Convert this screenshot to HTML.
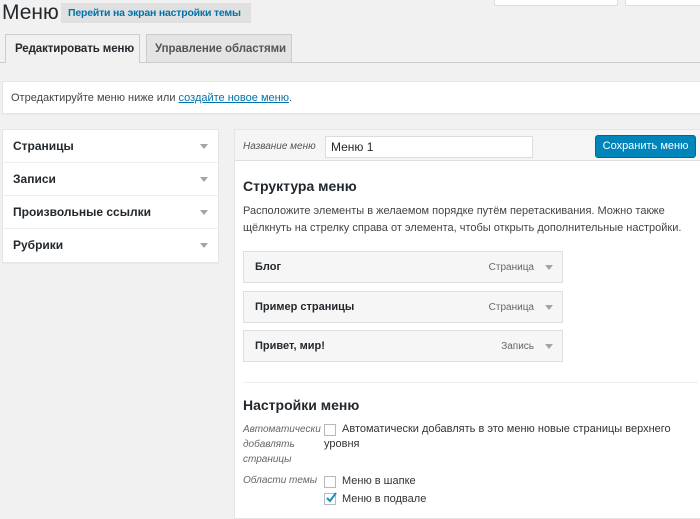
<!DOCTYPE html>
<html><head><meta charset="utf-8"><style>
*{box-sizing:border-box;margin:0;padding:0}
body{width:700px;height:515px;background:#f1f1f1;font-family:"Liberation Sans",sans-serif;color:#23282d;position:relative;overflow:hidden;font-size:12px}
.a{position:absolute;white-space:nowrap}
.box{background:#fff;border:1px solid #e5e5e5;box-shadow:0 1px 1px rgba(0,0,0,.04)}
.tri{width:0;height:0;border-left:4px solid transparent;border-right:4px solid transparent;border-top:5px solid #a0a5aa;position:absolute}
.item{position:absolute;left:243px;width:320px;height:32px;background:#f6f6f6;border:1px solid #dfdfdf;font-weight:bold;font-size:11px;padding:9px 11px;}
.item span{position:absolute;right:28px;top:10px;font-weight:normal;color:#666;font-size:10px}
.item .tri{right:9px;top:13px}
.cb{position:absolute;width:12px;height:12px;border:1px solid #b4b9be;background:#fff}
</style></head><body>
<div class="a" style="left:494px;top:-4px;width:124px;height:10px;background:#fff;border:1px solid #ddd;border-radius:2px"></div>
<div class="a" style="left:625px;top:-4px;width:80px;height:10px;background:#fff;border:1px solid #ddd;border-radius:2px"></div>
<div class="a" style="left:2px;top:1px;font-size:21px;color:#23282d">Меню</div>
<div class="a" style="left:61px;top:3px;width:190px;height:20px;background:#e0e0e0;color:#0073aa;font-weight:bold;font-size:10.5px;padding:4px 7px;letter-spacing:-0.2px">Перейти на экран настройки темы</div>
<div class="a" style="left:0;top:62px;width:700px;height:1px;background:#ccc"></div>
<div class="a" style="left:5px;top:34px;width:135px;height:29px;background:#f1f1f1;border:1px solid #ccc;border-bottom:none;font-weight:bold;font-size:11.5px;padding:8px 9px;letter-spacing:-0.1px">Редактировать меню</div>
<div class="a" style="left:146px;top:34px;width:146px;height:28px;background:#e4e4e4;border:1px solid #ccc;border-bottom:none;color:#555;font-weight:bold;font-size:11.5px;padding:8px 8px;letter-spacing:-0.1px">Управление областями</div>
<div class="a box" style="left:2px;top:81px;width:700px;height:33px;padding:10px 8px;font-size:11px;color:#444">Отредактируйте меню ниже или <span style="color:#0073aa;text-decoration:underline">создайте новое меню</span>.</div>
<div class="a box" style="left:2px;top:129px;width:217px;height:134px"></div>
<div class="a" style="left:13px;top:139px;font-weight:bold;font-size:12px">Страницы</div>
<div class="a" style="left:13px;top:172px;font-weight:bold;font-size:12px">Записи</div>
<div class="a" style="left:13px;top:205px;font-weight:bold;font-size:12px">Произвольные ссылки</div>
<div class="a" style="left:13px;top:238px;font-weight:bold;font-size:12px">Рубрики</div>
<div class="a" style="left:3px;top:162px;width:215px;height:1px;background:#eee"></div>
<div class="a" style="left:3px;top:195px;width:215px;height:1px;background:#eee"></div>
<div class="a" style="left:3px;top:228px;width:215px;height:1px;background:#eee"></div>
<div class="tri" style="left:200px;top:144px"></div>
<div class="tri" style="left:200px;top:177px"></div>
<div class="tri" style="left:200px;top:210px"></div>
<div class="tri" style="left:200px;top:243px"></div>
<div class="a" style="left:234px;top:129px;width:470px;height:390px;background:#fff;border:1px solid #e5e5e5"></div>
<div class="a" style="left:235px;top:130px;width:470px;height:31px;background:#f5f5f5;border-bottom:1px solid #dfdfdf"></div>
<div class="a" style="left:243px;top:141px;font-style:italic;font-size:10px;color:#555">Название меню</div>
<div class="a" style="left:325px;top:136px;width:208px;height:22px;background:#fff;border:1px solid #ddd;padding:3px 5px;font-size:12px">Меню 1</div>
<div class="a" style="left:595px;top:135px;width:101px;height:23px;background:#0085ba;border:1px solid #006799;border-radius:3px;color:#fff;font-size:11px;padding:4px 0;text-align:center">Сохранить меню</div>
<div class="a" style="left:243px;top:178px;font-weight:bold;font-size:14px">Структура меню</div>
<div class="a" style="left:243px;top:203px;font-size:11px;color:#444;line-height:17px;width:460px;white-space:normal">Расположите элементы в желаемом порядке путём перетаскивания. Можно также щёлкнуть на стрелку справа от элемента, чтобы открыть дополнительные настройки.</div>
<div class="item" style="top:251px">Блог<span>Страница</span><div class="tri"></div></div>
<div class="item" style="top:291px">Пример страницы<span>Страница</span><div class="tri"></div></div>
<div class="item" style="top:330px">Привет, мир!<span>Запись</span><div class="tri"></div></div>
<div class="a" style="left:243px;top:382px;width:455px;height:1px;background:#eee"></div>
<div class="a" style="left:243px;top:397px;font-weight:bold;font-size:14px">Настройки меню</div>
<div class="a" style="left:243px;top:422px;font-style:italic;font-size:10px;color:#666;line-height:15px;width:80px;white-space:normal">Автоматически добавлять страницы</div>
<div class="cb" style="left:324px;top:424px"></div>
<div class="a" style="left:342px;top:423px;font-size:11px;color:#333">Автоматически добавлять в это меню новые страницы верхнего</div>
<div class="a" style="left:324px;top:438px;font-size:11px;color:#333">уровня</div>
<div class="a" style="left:243px;top:475px;font-style:italic;font-size:10px;color:#666">Области темы</div>
<div class="cb" style="left:324px;top:476px"></div>
<div class="a" style="left:342px;top:475px;font-size:11px;color:#333">Меню в шапке</div>
<div class="cb" style="left:324px;top:493px"></div>
<svg class="a" style="left:324px;top:491px" width="14" height="14"><path d="M3 7l3 3 6-8" stroke="#1e8cbe" stroke-width="2" fill="none"/></svg>
<div class="a" style="left:342px;top:493px;font-size:11px;color:#333">Меню в подвале</div>
</body></html>
